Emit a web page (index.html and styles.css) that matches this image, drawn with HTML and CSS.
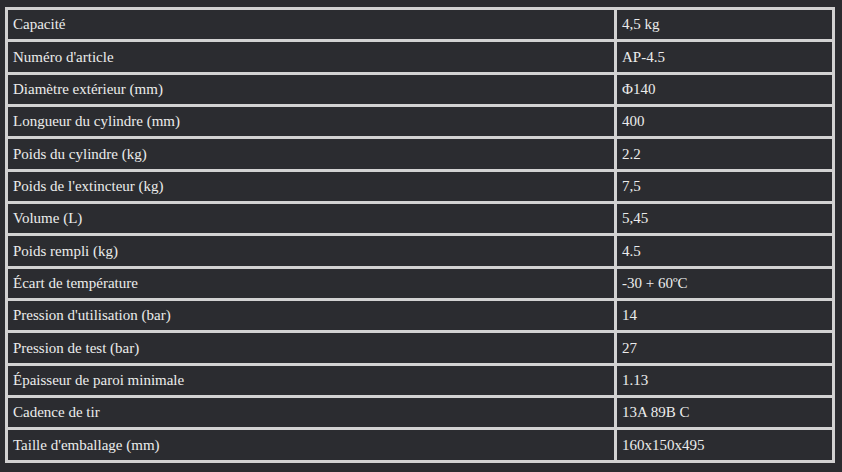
FILE: index.html
```html
<!DOCTYPE html>
<html lang="fr">
<head>
<meta charset="utf-8">
<title>Spécifications</title>
<link rel="stylesheet" href="styles.css">
</head>
<body>
<div class="wrap">
<table class="spec">
<tbody>
<tr><td class="k">Capacité</td><td class="v">4,5 kg</td></tr>
<tr><td class="k">Numéro d'article</td><td class="v">AP-4.5</td></tr>
<tr><td class="k">Diamètre extérieur (mm)</td><td class="v">Φ140</td></tr>
<tr><td class="k">Longueur du cylindre (mm)</td><td class="v">400</td></tr>
<tr><td class="k">Poids du cylindre (kg)</td><td class="v">2.2</td></tr>
<tr><td class="k">Poids de l'extincteur (kg)</td><td class="v">7,5</td></tr>
<tr><td class="k">Volume (L)</td><td class="v">5,45</td></tr>
<tr><td class="k">Poids rempli (kg)</td><td class="v">4.5</td></tr>
<tr><td class="k">Écart de température</td><td class="v">-30 + 60ºC</td></tr>
<tr><td class="k">Pression d'utilisation (bar)</td><td class="v">14</td></tr>
<tr><td class="k">Pression de test (bar)</td><td class="v">27</td></tr>
<tr><td class="k">Épaisseur de paroi minimale</td><td class="v">1.13</td></tr>
<tr><td class="k">Cadence de tir</td><td class="v">13A 89B C</td></tr>
<tr><td class="k">Taille d'emballage (mm)</td><td class="v">160x150x495</td></tr>
</tbody>
</table>
</div>
</body>
</html>
```
FILE: styles.css
```css
html, body {
  margin: 0;
  padding: 0;
  background: #2b2c30;
}
.wrap {
  padding: 7px 0 0 5px;
}
.spec {
  border-collapse: collapse;
  width: 830px;
  height: 456px;
  font-family: "Liberation Serif", "Times New Roman", serif;
  font-size: 15px;
  color: #ececec;
}
.spec td {
  border: 3px solid #d2d2d2;
  padding: 0 0 0 5px;
  vertical-align: middle;
  background: #2b2c30;
}
.spec td.k {
  width: 601px;
}
```
